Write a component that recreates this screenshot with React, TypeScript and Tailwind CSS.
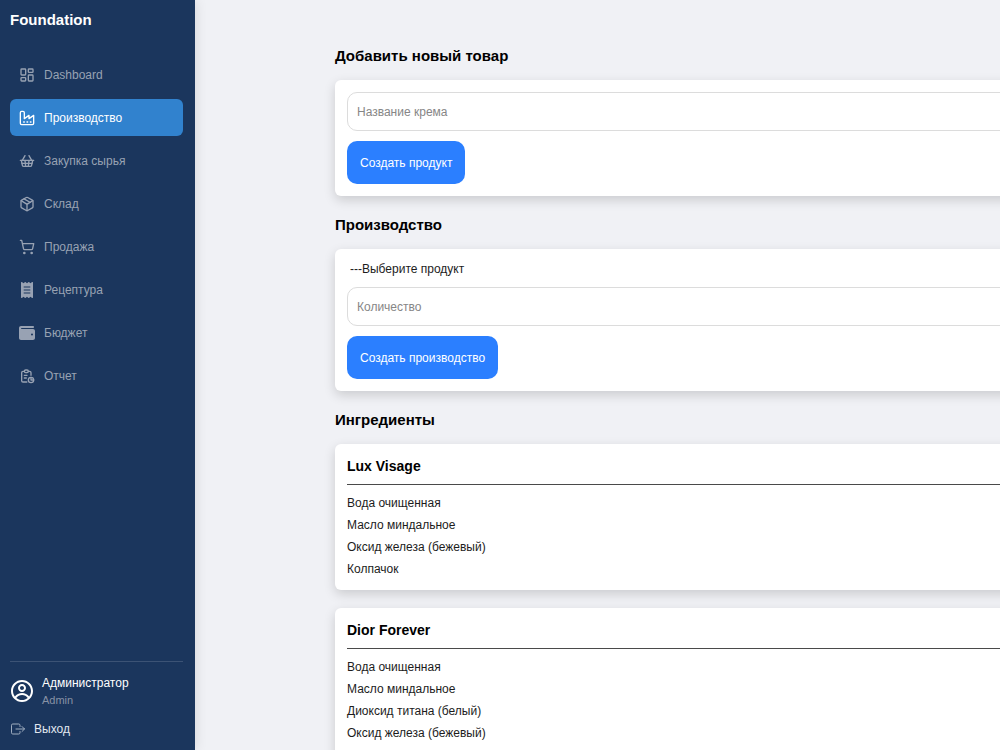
import { useState } from "react"
import clsx from "clsx"
import type { IconType } from "react-icons"
import { LuFactory, LuLayoutDashboard, LuPackage, LuShoppingBasket, LuShoppingCart } from "react-icons/lu"
import { FaReceipt, FaWallet } from "react-icons/fa6"
import { TbReport } from "react-icons/tb"
import { CgProfile } from "react-icons/cg"
import { IoExitOutline } from "react-icons/io5"

interface NavItem {
  title: string
  href: string
  icon: IconType
}

const navItems: NavItem[] = [
  { title: "Dashboard", href: "#dashboard", icon: LuLayoutDashboard },
  { title: "Производство", href: "#production", icon: LuFactory },
  { title: "Закупка сырья", href: "#purchase", icon: LuShoppingBasket },
  { title: "Склад", href: "#warehouse", icon: LuPackage },
  { title: "Продажа", href: "#sales", icon: LuShoppingCart },
  { title: "Рецептура", href: "#recipes", icon: FaReceipt },
  { title: "Бюджет", href: "#budget", icon: FaWallet },
  { title: "Отчет", href: "#report", icon: TbReport },
]

const products = [
  {
    name: "Lux Visage",
    ingredients: ["Вода очищенная", "Масло миндальное", "Оксид железа (бежевый)", "Колпачок"],
  },
  {
    name: "Dior Forever",
    ingredients: [
      "Вода очищенная",
      "Масло миндальное",
      "Диоксид титана (белый)",
      "Оксид железа (бежевый)",
      "Колпачок",
    ],
  },
]

function Sidebar() {
  return (
    <aside className="sticky top-0 flex h-screen w-[195px] shrink-0 flex-col bg-[#1b365d] pr-3 pl-[10px] shadow-[0_0_12px_rgba(0,0,0,0.12)]">
      <div className="pt-2 text-[15px] leading-6 font-bold text-white">Foundation</div>
      <nav className="mt-6 flex flex-col gap-[6px]">
        {navItems.map(({ title, href, icon: Icon }) => {
          const active = href === "#production"
          return (
            <a
              key={href}
              href={href}
              className={clsx(
                "flex h-[37px] items-center gap-[9px] rounded-md px-[9px] text-xs",
                active ? "bg-[#3182ce] text-white" : "text-[#98a2b3] hover:text-white"
              )}
            >
              <Icon className="h-4 w-4" />
              {title}
            </a>
          )
        })}
      </nav>
      <div className="mt-auto border-t border-white/15 pt-3 pb-3">
        <div className="flex items-center gap-2">
          <CgProfile className="h-6 w-6 text-white" />
          <div>
            <p className="text-xs leading-[18px] text-white">Администратор</p>
            <p className="text-[11px] leading-4 text-[#8792a5]">Admin</p>
          </div>
        </div>
        <button type="button" className="mt-3 flex items-center gap-2 text-xs leading-[18px] text-[#e2e8f0]">
          <IoExitOutline className="h-4 w-4 text-[#a0aec0]" />
          Выход
        </button>
      </div>
    </aside>
  )
}

function SectionTitle({ children }: { children: React.ReactNode }) {
  return <h2 className="mb-3 text-[15px] leading-6 font-bold text-black">{children}</h2>
}

const cardClass = "rounded-md bg-white shadow-[0_4px_12px_rgba(0,0,0,0.16)]"
const inputClass =
  "h-[39px] w-full rounded-[10px] border border-[#dcdcdc] px-[9px] text-xs outline-none placeholder:text-[#868686]"
const buttonClass = "h-[43px] rounded-[10px] bg-[#2b7fff] px-[13px] text-xs text-white hover:bg-[#1a6ff0]"

export default function App() {
  const [name, setName] = useState("")
  const [product, setProduct] = useState("")
  const [amount, setAmount] = useState("")

  return (
    <div className="flex min-h-screen bg-[#f0f1f5] font-['Liberation_Sans',Arial,sans-serif] text-[#1c1c1c]">
      <Sidebar />
      <main className="h-screen flex-1 overflow-hidden pt-11 pl-[140px]">
        <div className="flex min-w-[800px] flex-col gap-[17px]">
          <section>
            <SectionTitle>Добавить новый товар</SectionTitle>
            <form className={clsx(cardClass, "flex flex-col items-start gap-[10px] p-3")}>
              <input
                className={inputClass}
                aria-label="Название крема"
                placeholder="Название крема"
                value={name}
                onChange={e => setName(e.target.value)}
              />
              <button type="button" className={buttonClass}>Создать продукт</button>
            </form>
          </section>

          <section>
            <SectionTitle>Производство</SectionTitle>
            <form className={clsx(cardClass, "flex flex-col items-start gap-[10px] p-3")}>
              <select
                className="h-4 w-full appearance-none px-[3px] text-xs outline-none"
                aria-label="Выберите продукт"
                value={product}
                onChange={e => setProduct(e.target.value)}
              >
                <option value="">---Выберите продукт</option>
                {products.map(p => (
                  <option key={p.name} value={p.name}>{p.name}</option>
                ))}
              </select>
              <input
                className={inputClass}
                aria-label="Количество"
                placeholder="Количество"
                value={amount}
                onChange={e => setAmount(e.target.value)}
              />
              <button type="button" className={buttonClass}>Создать производство</button>
            </form>
          </section>

          <section>
            <SectionTitle>Ингредиенты</SectionTitle>
            <div className="flex flex-col gap-[18px]">
              {products.map(p => (
                <article key={p.name} className={clsx(cardClass, "px-3 pt-3 pb-[10px]")}>
                  <h3 className="border-b border-[#4a4a4a] pb-2 text-sm leading-5 font-bold text-black">{p.name}</h3>
                  <ul className="mt-[7px] text-xs leading-[22px]">
                    {p.ingredients.map(item => (
                      <li key={item}>{item}</li>
                    ))}
                  </ul>
                </article>
              ))}
            </div>
          </section>
        </div>
      </main>
    </div>
  )
}
